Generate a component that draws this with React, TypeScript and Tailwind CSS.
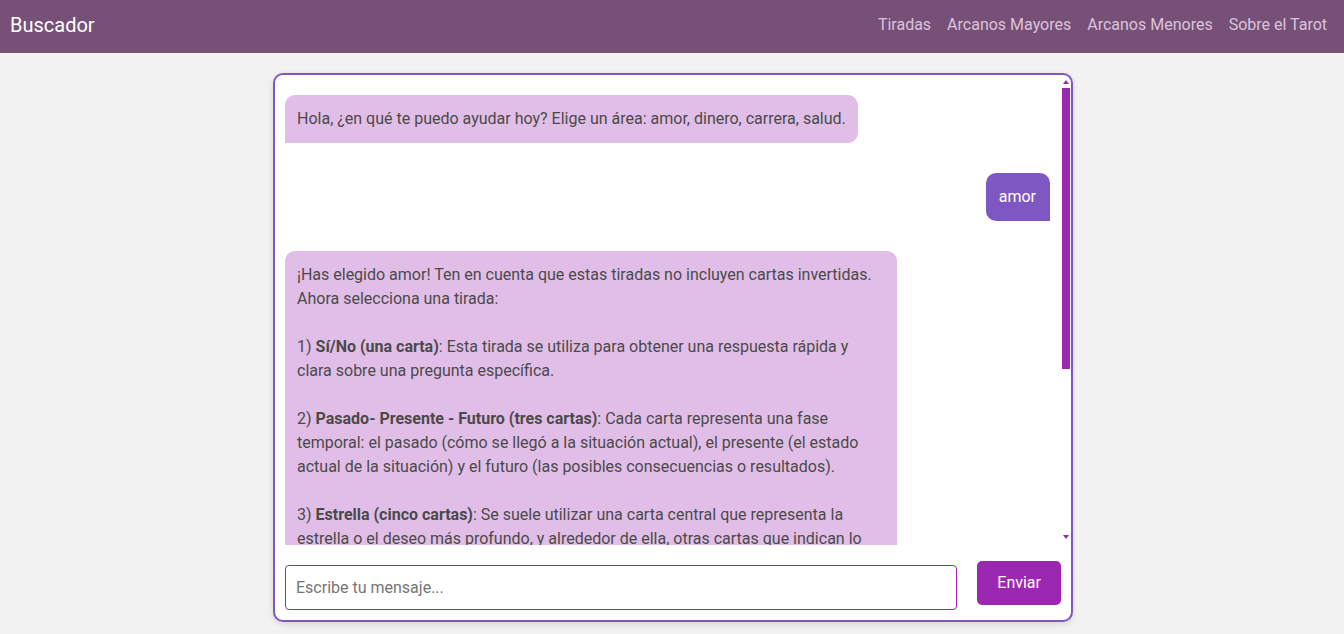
import React from "react";

const font = { fontFamily: "Roboto, 'Noto Sans', sans-serif" };

function ScrollBar() {
  return (
    <div className="w-[11px] shrink-0 flex flex-col items-center pt-[5px] pb-[6px]">
      <div className="w-0 h-0 border-l-[3px] border-r-[3px] border-b-[4px] border-l-transparent border-r-transparent border-b-[#9c27b0]" />
      <div className="mt-[4px] w-[8px] h-[281px] bg-[#9c27b0]" />
      <div className="flex-1" />
      <div className="w-0 h-0 border-l-[3px] border-r-[3px] border-t-[4px] border-l-transparent border-r-transparent border-t-[#9c27b0]" />
    </div>
  );
}

export default function App() {
  return (
    <div className="min-h-screen bg-[#f2f2f2]" style={font}>
      <nav className="h-[53px] bg-[#765077] flex items-center justify-between pl-[10px] pr-[17px] pb-[4px]">
        <span className="text-white text-[20px]">Buscador</span>
        <div className="flex gap-[16px] text-[16px] text-[#dcc3dc]">
          <a>Tiradas</a>
          <a>Arcanos Mayores</a>
          <a>Arcanos Menores</a>
          <a>Sobre el Tarot</a>
        </div>
      </nav>
      <div className="mx-auto mt-[20px] w-[800px] h-[549px] bg-white border-2 border-[#7e57c2] rounded-[10px] shadow-[0_2px_6px_rgba(0,0,0,0.12)] flex flex-col overflow-hidden translate-x-[1px]">
        <div className="h-[470px] flex">
          <div className="flex-1 min-w-0 overflow-hidden px-[10px] pt-[20px] pb-[10px] flex flex-col gap-[30px] text-[16px] leading-[24px]">
            <div className="self-start max-w-[80%] bg-[#e1bee7] text-[#4a4a4a] px-[12px] py-[12px] rounded-t-[10px] rounded-br-[10px]">
              Hola, ¿en qué te puedo ayudar hoy? Elige un área: amor, dinero, carrera, salud.
            </div>
            <div className="self-end max-w-[80%] bg-[#7e57c2] text-white pl-[13px] pr-[14px] py-[12px] rounded-t-[10px] rounded-bl-[10px]">
              amor
            </div>
            <div className="self-start max-w-[80%] bg-[#e1bee7] text-[#4a4a4a] px-[12px] py-[12px] rounded-t-[10px] rounded-br-[10px] shrink-0">
              ¡Has elegido amor! Ten en cuenta que estas tiradas no incluyen cartas invertidas. Ahora selecciona una tirada:
              <br />
              <br />
              1) <b>Sí/No (una carta)</b>: Esta tirada se utiliza para obtener una respuesta rápida y clara sobre una pregunta específica.
              <br />
              <br />
              2) <b>Pasado- Presente - Futuro (tres cartas)</b>: Cada carta representa una fase temporal: el pasado (cómo se llegó a la situación actual), el presente (el estado actual de la situación) y el futuro (las posibles consecuencias o resultados).
              <br />
              <br />
              3) <b>Estrella (cinco cartas)</b>: Se suele utilizar una carta central que representa la estrella o el deseo más profundo, y alrededor de ella, otras cartas que indican lo que puede ayudar o dificultar su realización.
              <br />
              <br />
              4) <b>Cruz Celta (diez cartas)</b>: Es una de las tiradas más completas y detalladas, que ofrece una visión profunda de la situación.
            </div>
          </div>
          <ScrollBar />
        </div>
        <div className="flex items-center gap-[20px] p-[10px]">
          <input
            className="flex-1 mt-[10px] h-[45px] border border-[#9c27b0] rounded-[4px] px-[10px] text-[16px] text-[#4a4a4a] placeholder:text-[#757575] outline-none"
            placeholder="Escribe tu mensaje..."
            style={font}
          />
          <button className="h-[44px] px-[20px] bg-[#9c27b0] text-white text-[16px] rounded-[5px]" style={font}>
            Enviar
          </button>
        </div>
      </div>
    </div>
  );
}
